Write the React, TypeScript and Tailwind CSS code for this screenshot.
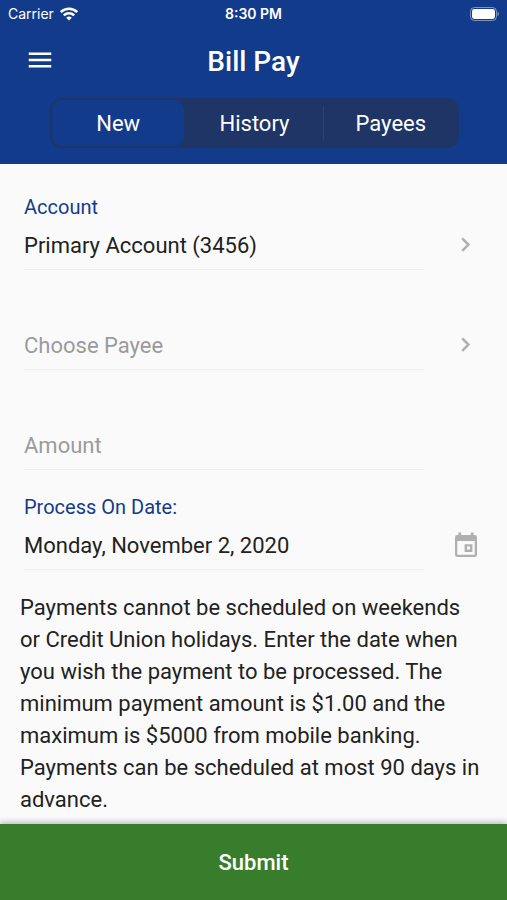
import { useState } from "react";
import type { ReactNode } from "react";
import { MdMenu } from "react-icons/md";

const TABS = ["New", "History", "Payees"];

function StatusBar() {
  return (
    <div className="grid grid-cols-3 items-center h-7 px-2 text-sm font-semibold font-['Inter',sans-serif]">
      <div className="flex items-center gap-1.5 font-normal">
        <span>Carrier</span>
        <svg viewBox="0 0 18 14" className="w-[18px] h-[14px]" fill="none" stroke="currentColor" strokeWidth="2.6">
          <path d="M.8 5a11.8 11.8 0 0 1 16.4 0" />
          <path d="M3.8 8.4a7.5 7.5 0 0 1 10.4 0" />
          <path d="M9 13.6 6.2 10.8a4 4 0 0 1 5.600 0z" fill="currentColor" stroke="none" />
        </svg>
      </div>
      <span className="text-center">8:30 PM</span>
      <svg viewBox="0 0 29 14" className="w-[29px] h-[14px] justify-self-end">
        <rect x="0.5" y="0.5" width="26" height="13" rx="4" fill="none" stroke="currentColor" strokeOpacity="0.45" />
        <rect x="2" y="2" width="23" height="10" rx="2.4" fill="currentColor" />
        <path d="M27.600 4.800c1.600.6 1.600 3.800 0 4.400z" fill="currentColor" fillOpacity="0.5" />
      </svg>
    </div>
  );
}

function Chevron() {
  return (
    <svg viewBox="0 0 24 24" className="size-6" fill="none" stroke="currentColor" strokeWidth="2.6">
      <path d="m8.2 5.4 6.2 6.200-6.200 6.200" />
    </svg>
  );
}

function CalendarIcon() {
  return (
    <svg viewBox="0 0 24 26" className="w-6 h-[26px]" fill="currentColor">
      <path
        fillRule="evenodd"
        d="M4.4.5h2.8V3h9.600V.5h2.800V3h1.200A2.200 2.200 0 0 1 23 5.200v17.600a2.200 2.200 0 0 1-2.200 2.200H3.200A2.200 2.200 0 0 1 1 22.800V5.200A2.200 2.200 0 0 1 3.200 3h1.200zM3.300 9v13.700h17.400V9z"
      />
      <path fillRule="evenodd" d="M10.600 12.200h7.800V20h-7.800zM13 14.600v3h3v-3z" />
    </svg>
  );
}

function Field({ id, label, children, action }: { id: string; label?: string; children: ReactNode; action?: ReactNode }) {
  return (
    <div className="flex flex-col justify-end h-[100px] pl-6">
      {label && (
        <label htmlFor={id} className="text-xl leading-[26px] text-[#133b8b]">
          {label}
        </label>
      )}
      <div className="flex items-center">
        <div className="flex-1 h-[50px] border-b border-[#eeeeee]">{children}</div>
        <div className="flex justify-center w-[83px] text-[#b0b0b0]">{action}</div>
      </div>
    </div>
  );
}

const control =
  "block w-full h-full pt-0.5 appearance-none bg-transparent outline-none text-[22px] placeholder:text-[#9b9b9b]";

export default function App() {
  const [tab, setTab] = useState("New");
  const [payee, setPayee] = useState("");

  return (
    <div className="flex flex-col min-h-screen bg-[#fafafa] text-[#222222] font-['Roboto',sans-serif]">
      <header className="bg-[#133b8b] text-white pb-4">
        <StatusBar />
        <div className="grid grid-cols-[80px_1fr_80px] items-center h-[70px] pb-0.5">
          <button aria-label="Menu" className="justify-self-center pb-1">
            <MdMenu className="size-[30px]" />
          </button>
          <h1 className="text-center text-[28px] leading-8 font-medium">Bill Pay</h1>
        </div>

        {/* Segmented control */}
        <div className="pl-[50px] pr-12">
          <div className="grid grid-cols-3 gap-1 h-[50px] p-0.5 rounded-xl bg-[#1e3566]">
            {TABS.map((t) => (
              <button
                key={t}
                onClick={() => setTab(t)}
                className={
                  t === tab
                    ? "rounded-[10px] bg-[#133b8b] text-[22px]"
                    : "relative text-[22px] last:before:absolute last:before:-left-0.5 last:before:top-1.5 last:before:bottom-1.5 last:before:w-px last:before:bg-[#2a4173]"
                }
              >
                {t}
              </button>
            ))}
          </div>
        </div>
      </header>

      <form className="flex flex-col flex-1 pt-1.5">
        <Field id="account" label="Account" action={<Chevron />}>
          <select id="account" className={control}>
            <option>Primary Account (3456)</option>
          </select>
        </Field>
        <Field id="payee" action={<Chevron />}>
          <select
            id="payee"
            aria-label="Choose Payee"
            value={payee}
            onChange={(e) => setPayee(e.target.value)}
            className={`${control} text-[#9b9b9b]`}
          >
            <option value="">Choose Payee</option>
          </select>
        </Field>
        <Field id="amount">
          <input id="amount" aria-label="Amount" placeholder="Amount" inputMode="decimal" className={control} />
        </Field>
        <Field
          id="date"
          label="Process On Date:"
          action={
            <button type="button" aria-label="Pick a date">
              <CalendarIcon />
            </button>
          }
        >
          <input id="date" readOnly value="Monday, November 2, 2020" className={control} />
        </Field>

        <p className="flex-1 pl-5 pr-6 pt-[22px] text-[22px] leading-8">
          Payments cannot be scheduled on weekends or Credit Union holidays. Enter the date when you wish the payment to
          be processed. The minimum payment amount is $1.00 and the maximum is $5000 from mobile banking. Payments can be
          scheduled at most 90 days in advance.
        </p>

        <button
          type="submit"
          className="h-[76px] bg-[#387d2b] text-white text-[22px] font-medium shadow-[0_-2px_6px_rgba(0,0,0,0.25)]"
        >
          Submit
        </button>
      </form>
    </div>
  );
}
